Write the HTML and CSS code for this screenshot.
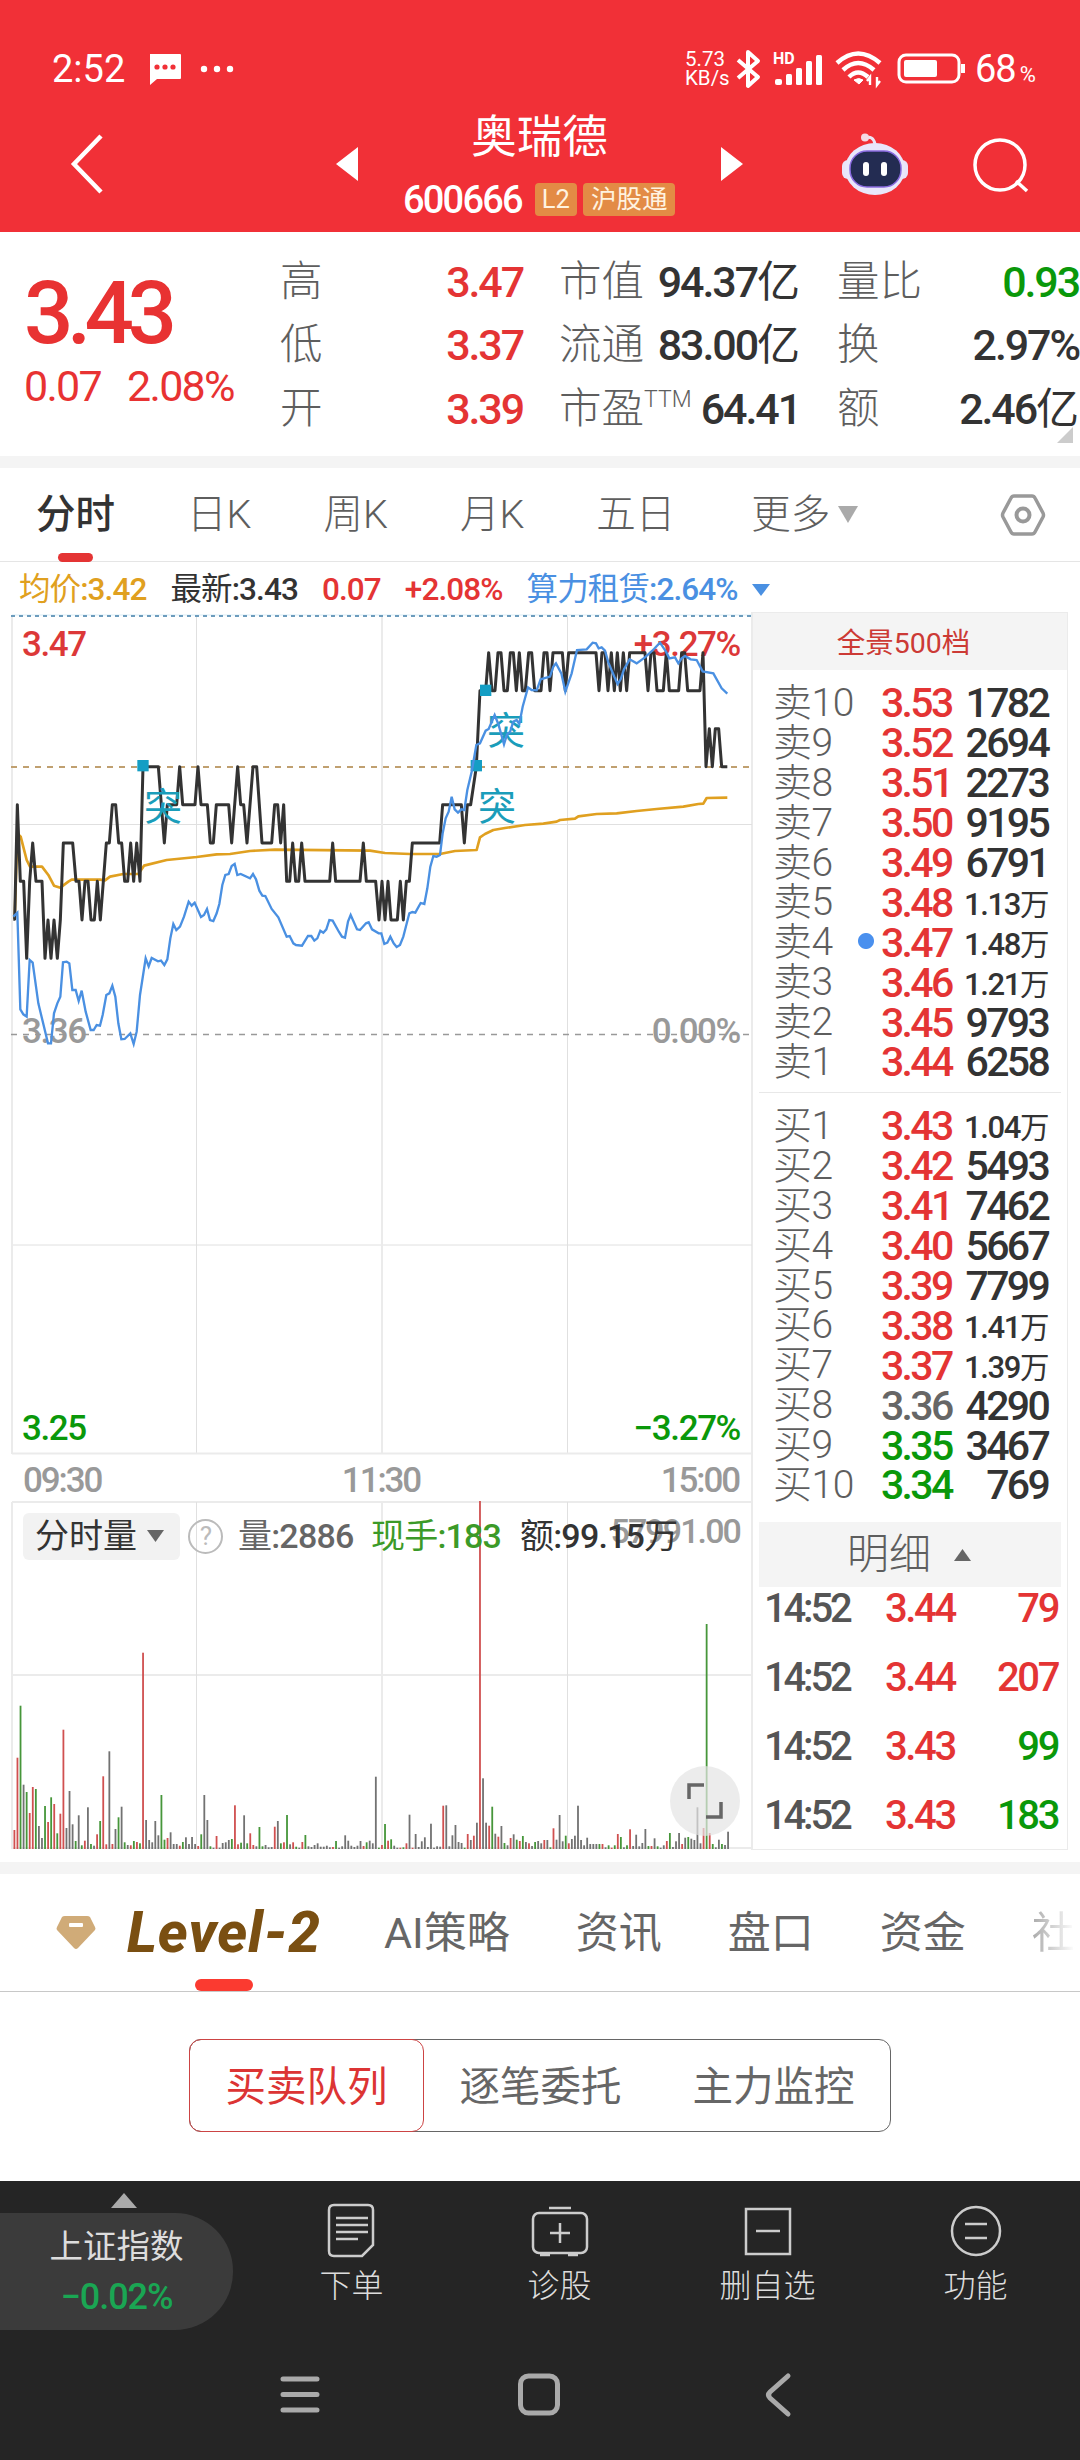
FILE: index.html
```html
<!DOCTYPE html>
<html lang="zh-CN">
<head>
	<meta charset="utf-8">
	<title>奥瑞德 600666</title>
	<link rel="stylesheet" href="styles.css">
</head>
<body>
	<header class="header">
		<div class="status">
			<span class="clock">2:52</span>
			<svg class="msg" width="32" height="31" viewBox="0 0 32 31"><path d="M1 0h30q1 0 1 1v23q0 1-1 1H8l-7 6V1z" fill="#fff"/><g fill="#f13037"><circle cx="8" cy="13" r="2.6"/><circle cx="16" cy="13" r="2.6"/><circle cx="24" cy="13" r="2.6"/></g></svg>
			<svg class="dots" width="34" height="8" viewBox="0 0 34 8" fill="#fff"><circle cx="4" cy="4" r="3.2"/><circle cx="17" cy="4" r="3.2"/><circle cx="30" cy="4" r="3.2"/></svg>
			<span class="speed">5.73<br>KB/s</span>
			<svg class="bt" width="26" height="38" viewBox="0 0 26 38" fill="none" stroke="#fff" stroke-width="4" stroke-linejoin="round"><path d="M2 10l20 17-10 9V2l10 9L2 28"/></svg>
			<svg class="signal" width="50" height="34" viewBox="0 0 50 34"><text x="0" y="12" class="hd">HD</text><g fill="#fff"><rect x="2" y="27" width="7" height="6" rx="2"/><rect x="13" y="22" width="6" height="11" rx="1.5"/><rect x="23" y="16" width="6" height="17" rx="1.5"/><rect x="33" y="9" width="6" height="24" rx="1.5"/><rect x="43" y="3" width="6" height="30" rx="1.5"/></g></svg>
			<svg class="wifi" width="48" height="36" viewBox="0 0 48 36" fill="none" stroke="#fff" stroke-width="4.5"><path d="M2 12q21-19 43 0"/><path d="M8 19q15-14 31 0"/><path d="M14 26q9-9 19 0"/><path d="M19 29q5-3 9 0l-4 4z" fill="#fff" stroke-width="1"/><path d="M35 34v-8l-3 4M42 26v8l3-4" stroke-width="2.4"/></svg>
			<svg class="battery" width="70" height="32" viewBox="0 0 70 32"><rect x="2" y="2" width="60" height="27" rx="7" fill="none" stroke="#fff" stroke-width="3"/><rect x="7" y="7" width="33" height="17" rx="2" fill="#fff"/><path d="M66 11v9" stroke="#fff" stroke-width="4"/></svg>
			<span class="level">68<small>%</small></span>
		</div>
		<div class="titlebar">
			<svg class="back" width="33" height="60" viewBox="0 0 33 60" fill="none" stroke="#fff" stroke-width="4.5"><path d="M31 2L4 30l27 28"/></svg>
			<svg class="prev" width="22" height="34" viewBox="0 0 22 34"><path d="M22 0v34L0 17z" fill="#fff"/></svg>
			<div class="stock">
				<h1>奥瑞德</h1>
				<div class="code"><span>600666</span><b class="l2">L2</b><b>沪股通</b></div>
			</div>
			<svg class="next" width="22" height="34" viewBox="0 0 22 34"><path d="M0 0v34l22-17z" fill="#fff"/></svg>
			<svg class="robot" width="68" height="62" viewBox="0 0 68 62">
				<path d="M24 5q8-3 10 6" fill="none" stroke="#ece6f6" stroke-width="3"/><circle cx="24" cy="4.500" r="4" fill="#f4d9e4"/>
				<rect x="1" y="27" width="14" height="19" rx="6" fill="#e9e4fa"/><rect x="53" y="27" width="14" height="19" rx="6" fill="#e9e4fa"/>
				<ellipse cx="34" cy="36" rx="30" ry="26" fill="#e9e7fb"/>
				<rect x="9" y="18" width="51" height="36" rx="17" fill="#232c52" stroke="#8a6be0" stroke-width="1.500"/>
				<rect x="22" y="29" width="6" height="14" rx="3" fill="#fff"/><rect x="40" y="29" width="6" height="14" rx="3" fill="#fff"/>
			</svg>
			<svg class="search" width="56" height="56" viewBox="0 0 56 56" fill="none" stroke="#fff" stroke-width="3.500"><circle cx="27" cy="27" r="25"/><path d="M43 43l11 10"/></svg>
		</div>
	</header>

	<section class="quote">
		<div class="last">
			<div class="price">3.43</div>
			<div class="change"><span>0.07</span><span>2.08%</span></div>
		</div>
		<dl class="c1">
			<div><dt>高</dt><dd class="red">3.47</dd></div>
			<div><dt>低</dt><dd class="red">3.37</dd></div>
			<div><dt>开</dt><dd class="red">3.39</dd></div>
		</dl>
		<dl class="c2">
			<div><dt>市值</dt><dd>94.37<span>亿</span></dd></div>
			<div><dt>流通</dt><dd>83.00<span>亿</span></dd></div>
			<div><dt>市盈<sup>TTM</sup></dt><dd>64.41</dd></div>
		</dl>
		<dl class="c3">
			<div><dt>量比</dt><dd class="green">0.93</dd></div>
			<div><dt>换</dt><dd>2.97%</dd></div>
			<div><dt>额</dt><dd>2.46<span>亿</span></dd></div>
		</dl>
		<svg class="corner" width="16" height="16" viewBox="0 0 16 16"><path d="M16 0v16H0z" fill="#ccc"/></svg>
	</section>

	<nav class="tabs">
		<a class="on">分时</a><a>日K</a><a>周K</a><a>月K</a><a>五日</a><a>更多</a>
		<svg class="down" width="20" height="17" viewBox="0 0 20 17"><path d="M0 0h20L10 17z" fill="#aaa"/></svg>
		<svg class="gear" width="46" height="42" viewBox="0 0 46 42" fill="none" stroke="#999"><path d="M14 2h18q2 0 3 2l8 15q1 2 0 4l-8 15q-1 2-3 2H14q-2 0-3-2L3 23q-1-2 0-4l8-15q1-2 3-2z" stroke-width="3.500"/><circle cx="23" cy="21" r="6.500" stroke-width="4"/></svg>
	</nav>

	<div class="legend">
		<span class="avg">均价<b>:3.42</b></span>
		<span>最新<b>:3.43</b></span>
		<span class="red"><b>0.07</b></span>
		<span class="red"><b>+2.08%</b></span>
		<span class="sector">算力租赁<b>:2.64%</b></span>
		<svg width="18" height="12" viewBox="0 0 18 12"><path d="M0 0h18L9 12z" fill="#4a90e2"/></svg>
	</div>

	<main class="board">
		<div class="charts">
			<svg class="trend" width="753" height="842" viewBox="0 612 753 842">
				<g stroke="#e0e0e0" fill="none">
					<path d="M196.500 616v838M567.500 616v838M12 824.500h740M12 1245h740"/>
					<path d="M12 616v838M382 616v838M12 1453.500h740" stroke="#ebebeb" stroke-width="2"/>
				</g>
				<path d="M12 615h740" stroke="#d9edf7"/>
				<path d="M11 616h741" stroke="#6c9cbd" stroke-width="2" stroke-dasharray="4 4"/>
				<path d="M11 767h740" stroke="#c0a070" stroke-width="1.800" stroke-dasharray="6 6"/>
				<path d="M11 1034.500h740" stroke="#999" stroke-width="1.500" stroke-dasharray="6 6"/>
				<g class="num">
					<text x="22" y="656" class="red">3.47</text>
					<text x="740" y="656" class="red end">+3.27%</text>
					<text x="22" y="1043" class="gray">3.36</text>
					<text x="740" y="1043" class="gray end">0.00%</text>
					<text x="22" y="1440" class="green">3.25</text>
					<text x="740" y="1440" class="green end">−3.27%</text>
				</g>
				<!-- three units per pixel, origin at 0,600 -->
				<g transform="translate(0 600) scale(.33333)" fill="none" stroke-linejoin="round">
					<polyline stroke="#e0a020" stroke-width="8" points="44,958 52,700 62,710 80,780 90,800 126,800 145,825 162,857 181,863 205,845 215,839 300,839 315,841 330,830 370,822 415,822 432,797 500,780 590,771 650,763 690,762 750,753 825,749 1110,752 1155,759 1230,762 1320,762 1365,753 1430,750 1440,712 1455,702 1480,690 1515,684 1575,675 1630,671 1670,665 1680,660 1725,656 1735,649 1790,642 1850,640 1910,633 1970,627 2050,620 2095,612 2110,611 2120,594 2182,593"/>
					<polyline stroke="#333" stroke-width="9" points="40,958 44,958 52,614 61,844 71,844 80,1075 89,844 98,729 108,844 126,844 135,1075 144,960 153,1075 162,960 172,1075 181,960 190,729 218,729 228,844 237,844 246,960 255,844 264,844 273,960 283,960 292,844 301,960 310,844 319,729 328,729 337,614 347,614 356,729 365,729 374,844 383,844 392,729 401,844 410,729 420,844 429,500 475,500 484,614 493,729 502,614 530,614 539,500 548,614 585,614 594,500 603,614 622,614 631,729 640,729 649,614 686,614 695,729 713,500 722,614 731,614 741,729 759,500 770,500 786,729 815,729 824,614 833,614 842,729 851,614 860,844 869,844 878,729 887,844 896,844 905,729 915,844 989,844 998,729 1007,844 1080,844 1090,729 1099,844 1127,844 1137,960 1146,844 1155,960 1164,844 1173,960 1192,960 1201,844 1210,960 1219,844 1228,844 1237,729 1319,729 1328,614 1384,614 1393,729 1402,614 1412,614 1429,500 1440,272 1457,272 1466,158 1476,272 1485,272 1494,158 1503,158 1512,272 1522,272 1531,158 1540,158 1549,272 1558,158 1567,272 1576,272 1586,158 1595,158 1604,272 1623,272 1632,158 1641,158 1650,272 1659,158 1687,158 1696,272 1706,158 1788,158 1797,272 1806,158 1815,158 1824,272 1834,158 1843,272 1852,158 1861,272 1870,158 1880,272 1889,158 1935,158 1944,272 1953,158 1962,158 1971,272 1990,272 1999,158 2008,272 2036,272 2045,158 2054,158 2063,272 2100,272 2109,158 2118,500 2128,386 2137,500 2146,386 2156,386 2165,500 2182,500"/>
					<g fill="#149ec4"><rect x="412" y="480" width="34" height="34"/><rect x="1412" y="480" width="34" height="34"/><rect x="1440" y="254" width="34" height="34"/></g>
				</g>
				<g class="mark"><text x="144" y="820">突</text><text x="487" y="744">突</text><text x="478" y="820">突</text></g>
				<g transform="translate(0 600) scale(.33333)" fill="none">
					<polyline stroke="#4a90e2" stroke-width="7" points="40,950 52,938 61,1228 70,1243 80,1250 89,1080 98,1088 115,1210 144,1330 153,1330 162,1240 172,1210 181,1190 189,1087 200,1085 208,1090 217,1170 227,1170 236,1203 245,1172 257,1235 272,1290 281,1290 290,1275 300,1277 308,1245 319,1185 328,1180 337,1157 346,1190 355,1270 364,1318 374,1317 391,1300 401,1332 410,1295 420,1185 437,1075 446,1099 455,1074 474,1084 483,1082 493,1095 502,1078 511,1015 520,972 529,990 540,980 552,950 566,905 575,917 584,908 603,951 612,945 621,927 630,960 640,963 650,940 658,912 667,855 676,825 686,822 695,798 704,792 712,825 722,822 750,835 759,822 768,838 778,872 787,887 796,888 815,927 835,952 860,1010 869,1008 880,1030 888,1035 906,1037 924,1008 934,1008 943,1022 952,1015 961,992 970,998 979,988 988,960 998,962 1017,996 1026,1010 1035,1013 1044,965 1052,945 1071,988 1080,990 1098,970 1106,967 1116,988 1136,1000 1144,1000 1153,1032 1162,1028 1171,1010 1181,1030 1190,1041 1200,1035 1210,1010 1228,940 1237,936 1246,938 1262,909 1273,912 1282,865 1291,800 1300,768 1310,770 1320,765 1328,700 1337,655 1346,635 1355,590 1364,628 1374,638 1384,628 1393,630 1402,570 1415,515 1429,435 1440,430 1457,392 1466,387 1484,345 1495,372 1512,433 1521,403 1530,396 1540,365 1550,360 1558,372 1568,320 1584,262 1595,270 1610,271 1622,238 1650,230 1660,200 1668,190 1684,220 1696,275 1715,220 1731,150 1760,148 1778,128 1788,130 1796,145 1805,142 1815,152 1825,187 1843,230 1853,252 1862,238 1872,208 1889,178 1910,190 1935,172 1962,147 1980,128 1998,155 2008,175 2025,172 2035,190 2045,175 2055,168 2072,178 2090,180 2108,214 2140,220 2165,265 2182,281"/>
				</g>
			</svg>
			<div class="times"><span>09:30</span><span>11:30</span><span>15:00</span></div>
			<div class="volume">
				<svg width="753" height="349" viewBox="0 1501 753 349">
					<path d="M12 1502h740M12 1675h740M12 1848h740M12 1502v347M382 1502v347" stroke="#ebebeb" stroke-width="2"/>
					<path d="M196.500 1502v347M567.500 1502v347" stroke="#e0e0e0"/>
					<g id="bars"></g>
					<text x="740" y="1543" class="num max gray end">57991.00</text>
				</svg>
				<div class="vinfo">
					<span class="chip">分时量<svg width="17" height="12" viewBox="0 0 17 12"><path d="M0 0h17L8.500 12z" fill="#666"/></svg></span>
					<span class="help">?</span>
					<span class="v1">量<b>:2886</b></span>
					<span class="v2">现手<b>:183</b></span>
					<span class="v3">额<b>:99.15</b>万</span>
				</div>
				<div class="expand"><svg width="36" height="36" viewBox="0 0 36 36" fill="none" stroke="#666" stroke-width="3.500"><path d="M2 16V2h15M34 19v15H19"/></svg></div>
			</div>
		</div>

		<aside class="book">
			<div class="bookhead">全景500档</div>
			<div class="rows" id="sell"></div>
			<div class="rows buy" id="buy"></div>
			<div class="detail">明细<svg width="17" height="12" viewBox="0 0 17 12"><path d="M0 12h17L8.500 0z" fill="#666"/></svg></div>
			<div class="ticks">
				<div><span>14:52</span><b>3.44</b><i class="red">79</i></div>
				<div><span>14:52</span><b>3.44</b><i class="red">207</i></div>
				<div><span>14:52</span><b>3.43</b><i class="green">99</i></div>
				<div><span>14:52</span><b>3.43</b><i class="green">183</i></div>
			</div>
		</aside>
	</main>

	<nav class="tabs2">
		<svg class="gem" width="40" height="36" viewBox="0 0 40 36"><path d="M9 1h22q2 0 3 1l5 10q1 2 0 3L22 33q-2 2-4 0L1 15q-1-1 0-3L6 2q1-1 3-1z" fill="#d0ab78"/><rect x="13" y="8" width="14" height="4" rx="1" fill="#fff"/></svg>
		<a class="on">Level-2</a><a>AI策略</a><a>资讯</a><a>盘口</a><a>资金</a><a class="fade">社</a>
	</nav>

	<div class="seg"><a class="on">买卖队列</a><a>逐笔委托</a><a>主力监控</a></div>

	<footer class="footer">
		<div class="actions">
			<div class="index">
				<svg width="26" height="15" viewBox="0 0 26 15"><path d="M0 15h26L13 0z" fill="#aaa"/></svg>
				<div><span>上证指数</span><em>−0.02%</em></div>
			</div>
			<a><svg width="60" height="56" viewBox="0 0 60 56"><path d="M12 2h34q5 0 5 5v35L40 53H12q-5 0-5-5V7q0-5 5-5zM14 15h32M14 22h32M14 29h32M14 36h22"/></svg>下单</a>
			<a><svg width="60" height="56" viewBox="0 0 60 56"><rect x="3" y="10" width="54" height="40" rx="6"/><path d="M19 5h22M30 20v20M20 30h20M10 52h10M38 52h10"/></svg>诊股</a>
			<a><svg width="60" height="56" viewBox="0 0 60 56"><path d="M8 6h44v45H8zM18 28h24"/></svg>删自选</a>
			<a><svg width="60" height="56" viewBox="0 0 60 56"><circle cx="30" cy="28" r="24"/><path d="M19 21h22M19 35h22"/></svg>功能</a>
		</div>
		<div class="sysnav">
			<svg width="40" height="44" viewBox="0 0 40 44"><path d="M3 6h34M3 21.500h34M3 37h34" stroke-linecap="round"/></svg>
			<svg width="42" height="44" viewBox="0 0 42 44"><rect x="2.500" y="3" width="37" height="37" rx="8"/></svg>
			<svg width="28" height="44" viewBox="0 0 28 44"><path d="M24 3L6 19q-3 3 0 6l18 16" stroke-linecap="round"/></svg>
		</div>
	</footer>
	<script src="script.js"></script>
</body>
</html>
```
FILE: styles.css
```css
* {
	box-sizing: border-box;
}
body {
	margin: 0;
	width: 1080px;
	height: 2460px;
	overflow: hidden;
	background: #fff;
	color: #333;
	font-family: Roboto, "Noto Sans CJK SC", sans-serif;
	white-space: nowrap;
}
svg {
	display: block;
	flex: none;
	overflow: visible;
}
h1, dl, dd {
	margin: 0;
}
b { font-weight: 500; }
.red { color: #e43434; fill: #dc3838; }
.green { color: #0a980a; fill: #0a980a; }
.gray { fill: #999; }

/* header */
.header {
	height: 232px;
	background: #f13037;
	color: #fff;
}
.status {
	display: flex;
	align-items: center;
	height: 100px;
	padding: 38px 0 0 52px;
}
.clock {
	width: 97px;
	font-size: 38px;
}
.dots { margin: 0 451px 0 19px; }
.speed {
	width: 51px;
	font-size: 20.5px;
	line-height: 19px;
}
.signal { margin-left: 11px; }
.hd {
	fill: #fff;
	font-size: 16px;
	font-weight: 700;
}
.wifi { margin-left: 12px; }
.battery { margin-left: 14px; }
.level {
	margin-left: 8px;
	font-size: 38px;
	letter-spacing: -1px;
}
.level small { font-size: 22px; margin-left: 4px; }
.titlebar {
	display: flex;
	align-items: center;
	height: 128px;
	padding-left: 70px;
}
.prev { margin-left: 233px; }
.stock {
	flex: none;
	width: 255px;
	margin: 0 54px;
	text-align: center;
}
.stock h1 {
	padding-top: 5px;
	font-size: 45.5px;
	font-weight: 400;
	line-height: 66px;
}
.code {
	display: flex;
	align-items: center;
	width: 300px;
	height: 57px;
	margin-left: -9px;
	letter-spacing: -1.8px;
	font-size: 38px;
	font-weight: 500;
}
.code b {
	margin-left: 6px;
	padding: 0 8px;
	border-radius: 4px;
	background: #e38b45;
	color: #fff3e0;
	font-size: 25.5px;
	font-weight: 400;
	line-height: 33px;
	letter-spacing: 0;
}
.code .l2 { margin-left: 13px; padding: 0 7px; }
.robot { margin-left: 98px; }
.search { margin-left: 64px; margin-top: 3px; }

/* quote */
.quote {
	display: flex;
	position: relative;
	height: 236px;
	padding-top: 18px;
	border-bottom: 12px solid #f4f4f4;
}
.last {
	width: 280px;
	padding: 20px 0 0 24px;
	color: #e83232;
}
.price {
	height: 86px;
	line-height: 86px;
	font-size: 87px;
	font-weight: 500;
	letter-spacing: -6.5px;
}
.change {
	display: flex;
	gap: 26px;
	line-height: 61px;
	font-size: 43px;
	letter-spacing: -1.7px;
}
.quote dl div {
	display: flex;
	justify-content: space-between;
	align-items: center;
	height: 63.5px;
	font-size: 43px;
	line-height: 60px;
}
.quote dt {
	color: #5e5e5e;
	font-size: 42.5px;
	font-weight: 300;
}
.quote dd {
	font-weight: 500;
	letter-spacing: -2.1px;
}
.quote dd span { font-weight: 400; letter-spacing: 0; }
.quote sup {
	font-size: 23px;
	line-height: 0;
	vertical-align: 16px;
}
.c1 { width: 243px; }
.c2 { width: 241px; margin-left: 36px; }
.c3 { width: 242px; margin-left: 37px; }
.corner {
	position: absolute;
	right: 7px;
	bottom: 13px;
}

/* period tabs */
.tabs {
	display: flex;
	align-items: center;
	height: 94px;
	padding-left: 36px;
	border-bottom: 1px solid #e5e5e5;
	font-size: 39.5px;
	font-weight: 300;
	color: #5e5e5e;
}
.tabs a {
	position: relative;
	line-height: 98px;
	margin-right: 72px;
}
.tabs a:nth-child(5) { margin-right: 76px; }
.tabs a:nth-child(6) { margin-right: 8px; }
.tabs .on {
	color: #333;
	font-weight: 500;
}
.tabs .on::after {
	content: "";
	position: absolute;
	left: 22px;
	bottom: 2px;
	width: 35px;
	height: 9px;
	border-radius: 5px;
	background: #e43434;
}
.gear { margin-left: 142px; }

.legend {
	display: flex;
	align-items: center;
	height: 50px;
	padding: 5px 0 0 19px;
	font-size: 31.5px;
	line-height: 44px;
	letter-spacing: -.9px;
}
.legend span { margin-right: 24px; }
.legend .avg { color: #e0a020; }
.legend .sector { color: #4a90e2; margin-right: 14px; }

/* chart */
.board {
	display: flex;
	height: 1250px;
	padding-right: 12px;
}
.charts { width: 753px; flex: none; border-right: 2px solid #ebebeb; height: 1238px; }
.trend { width: 753px; }
.num {
	font-size: 35px;
	font-weight: 500;
	letter-spacing: -1.4px;
}
.max { font-size: 34px; letter-spacing: -1.9px; }
.end { text-anchor: end; }
.mark {
	font-size: 38px;
	fill: #1a9dba;
}
.times {
	display: flex;
	justify-content: space-between;
	height: 47px;
	padding: 0 12px 0 23px;
	color: #999;
	font-size: 35px;
	font-weight: 500;
	letter-spacing: -2.1px;
	line-height: 53px;
}
.volume { position: relative; }
.vinfo {
	display: flex;
	align-items: center;
	position: absolute;
	top: 12px;
	left: 23px;
	height: 47px;
	font-size: 34px;
	line-height: 43px;
	letter-spacing: -.8px;
}
.vinfo > span { padding-bottom: 1px; }
.vinfo .chip {
	display: flex;
	align-items: center;
	width: 157px;
	height: 47px;
	padding-left: 12px;
	gap: 10px;
	border-radius: 6px;
	background: #f2f2f2;
	letter-spacing: 0;
}
.vinfo .help {
	width: 35px;
	height: 35px;
	margin: 0 15px 0 8px;
	border: 2px solid #bbb;
	border-radius: 50%;
	color: #bbb;
	font-size: 26px;
	line-height: 31px;
	text-align: center;
}
.v1 { width: 133px; color: #666; }
.v2 { width: 149px; color: #3c9a28; }
.expand {
	display: flex;
	align-items: center;
	justify-content: center;
	position: absolute;
	left: 670px;
	top: 265px;
	width: 70px;
	height: 70px;
	border-radius: 50%;
	background: rgba(228, 228, 228, .7);
}

/* order book */
.book {
	width: 315px;
	height: 1238px;
	border: 1px solid #ebebeb;
	border-left: 0;
}
.bookhead {
	height: 57px;
	background: #f4f4f4;
	color: #cc3a35;
	font-size: 28.5px;
	line-height: 61px;
	text-align: center;
	padding-right: 13px;
}
.rows {
	height: 423px;
	margin: 0 6px;
	padding-top: 12px;
	border-bottom: 1px solid #e8e8e8;
}
.rows.buy {
	height: 429px;
	border: 0;
}
.rows div {
	display: flex;
	align-items: center;
	height: 39.9px;
	padding-left: 14px;
	line-height: 40px;
}
.rows span {
	width: 108px;
	padding-top: 2px;
	color: #5e5e5e;
	font-size: 39px;
	font-weight: 300;
	letter-spacing: -.5px;
}
.rows .cur {
	background: radial-gradient(circle at 107px 20px, #4a90ee 7.500px, transparent 8.500px);
}
.rows b, .rows i {
	padding-top: 3px;
	font-size: 41px;
	font-weight: 500;
	letter-spacing: -2.7px;
}
.rows b { width: 70px; }
.rows i {
	flex: 1;
	padding-right: 13px;
	text-align: right;
	font-style: normal;
}
.rows .wan {
	padding-top: 7px;
	font-size: 31px;
	letter-spacing: -1.4px;
}
.rows u {
	font-weight: 400;
	text-decoration: none;
	font-size: 29.5px;
}
.rows .flat { color: #666; }
.detail {
	display: flex;
	align-items: center;
	gap: 23px;
	height: 65px;
	margin: 0 6px;
	padding-left: 88px;
	background: #f4f4f4;
	color: #5e5e5e;
	font-size: 42px;
	font-weight: 300;
	line-height: 61px;
}
.ticks { margin: -13px 9px 0 11px; }
.ticks div {
	display: flex;
	align-items: center;
	height: 69px;
	font-size: 40px;
	font-weight: 500;
	letter-spacing: -2.4px;
}
.ticks span { width: 121px; color: #555; letter-spacing: -3.2px; }
.ticks b { color: #e43434; }
.ticks i { flex: 1; text-align: right; font-style: normal; }

/* lower tabs */
.tabs2 {
	display: flex;
	align-items: center;
	height: 130px;
	padding-left: 56px;
	border-top: 12px solid #f4f4f4;
	border-bottom: 1.5px solid #c8c8c8;
	color: #666;
	font-size: 43px;
}
.tabs2 a {
	position: relative;
	margin-right: 66px;
	line-height: 120px;
}
.tabs2 .on {
	width: 191px;
	margin: 0 66px 0 31px;
	color: #7a4f12;
	font-size: 57px;
	font-style: italic;
	font-weight: 800;
	letter-spacing: .9px;
}
.tabs2 .on::after {
	content: "";
	position: absolute;
	left: 68px;
	bottom: 2px;
	width: 58px;
	height: 12px;
	border-radius: 6px;
	background: #fb3a30;
}
.tabs2 .fade {
	margin: 0;
	background: linear-gradient(90deg, #aaa, #fff);
	-webkit-background-clip: text;
	color: transparent;
}

.seg {
	display: flex;
	width: 702px;
	height: 93px;
	margin: 47px 0 0 189px;
	border: 1.5px solid #666;
	border-radius: 12px;
	color: #666;
	font-size: 40.5px;
	line-height: 95px;
}
.seg a {
	flex: 1;
	text-align: center;
}
.seg .on {
	margin: -1px 0 -1px -1px;
	border: 1.5px solid #cc4444;
	border-radius: 12px;
	color: #dc3434;
}

/* bottom bar */
.footer {
	height: 280px;
	margin-top: 49px;
	background: #252525;
	color: #ddd;
}
.actions {
	display: flex;
	height: 150px;
}
.actions a {
	display: flex;
	flex-direction: column;
	align-items: center;
	width: 208px;
	padding: 22px 0 0 1px;
	font-size: 32px;
	font-weight: 300;
	line-height: 55px;
}
.actions a svg {
	fill: none;
	stroke: #ccc;
	stroke-width: 2.5;
}
.index {
	width: 247px;
	padding-top: 12px;
}
.index svg { margin: 0 0 5px 111px; }
.index div {
	display: flex;
	flex-direction: column;
	align-items: center;
	width: 233px;
	height: 117px;
	padding-top: 8px;
	border-radius: 0 58px 58px 0;
	background: #3b3b3b;
	font-size: 33.5px;
	line-height: 51px;
}
.index em {
	color: #1aa653;
	font-size: 36px;
	font-style: normal;
	font-weight: 500;
	letter-spacing: -1px;
}
.sysnav {
	display: flex;
	padding: 42px 0 0 280px;
	fill: none;
	stroke: #aaa;
	stroke-width: 5;
}
.sysnav svg:nth-child(2) { margin: 0 204px 0 198px; }
```
FILE: script.js
```js
// minute volumes: colour letter + bar height, from 09:30
var vols = "r57 r274 g430 k193 g171 r108 r186 g180 k69 k33 g129 r81 g155 r135 g47 r106 r358 k63 k174 k74 g24 k101 g11 r25 k125 g15 k10 r44 g84 r218 r14 k293 r15 k60 g95 k127 g20 k12 r11 g24 r21 g17 r589 k87 k27 k20 k84 k41 g162 g28 r33 k50 k15 k15 r10 g21 k35 k15 k36 k15 r9 g44 k162 k87 g8 k4 r39 k4 k18 k20 k27 g30 r131 r14 g19 k101 g17 r47 r12 k8 g66 g8 k12 k5 k6 r67 k84 g17 r20 g102 k14 r20 g7 k4 r21 g42 k8 k6 k12 k17 k7 k7 k10 k5 r6 g24 k4 k8 k41 k25 k10 k6 k10 k24 r9 g20 k25 k17 k217 g4 r12 g75 r25 g29 k10 k4 r4 g5 r17 k103 r4 k45 k6 k23 k35 k6 k76 k4 k8 k7 r130 k131 k8 k41 k72 k21 k18 g4 r45 k27 r40 k79 r1044 k212 k79 r70 g127 k46 r37 k69 g18 k11 r33 k44 g28 r24 g39 k21 r17 k9 g21 k24 k17 r27 k27 g5 r62 k28 k102 k23 g40 r17 k30 k40 k130 k27 k11 k34 k15 k15 k15 g15 r15 k5 g11 r4 g11 r45 g36 k5 g11 r59 k9 k43 k8 k18 k60 g9 r9 k32 g8 k4 k11 r24 g48 k6 k23 k48 r15 k34 g36 k31 k27 k125 k17 r63 g675 r48 g15 k5 k28 g15 k12 k52".split(" ");
var colors = { r: "#d05050", g: "#46963a", k: "#727272" };
var html = "";
for (var i = 0; i < vols.length; i++) {
	var h = vols[i].slice(1) / 3;
	html += '<rect x="' + (13.5 + i * 3.063).toFixed(2) + '" y="' + (1849 - h).toFixed(1) + '" width="1.8" height="' + h.toFixed(1) + '" fill="' + colors[vols[i][0]] + '"/>';
}
document.getElementById("bars").innerHTML = html;

var sell = ["3.53 1782", "3.52 2694", "3.51 2273", "3.50 9195", "3.49 6791", "3.48 1.13万", "3.47 1.48万", "3.46 1.21万", "3.45 9793", "3.44 6258"];
var buy = ["3.43 1.04万", "3.42 5493", "3.41 7462", "3.40 5667", "3.39 7799", "3.38 1.41万", "3.37 1.39万", "3.36 4290", "3.35 3467", "3.34 769"];

function drawRows(id, list, side) {
	var out = "";
	list.forEach(function (row, n) {
		var p = row.split(" ");
		var cls = p[0] > 3.36 ? "red" : p[0] < 3.36 ? "green" : "flat";
		out += '<div class="' + (p[0] == 3.47 ? "cur" : "") + '"><span>' + side + (side == "卖" ? 10 - n : n + 1) + '</span><b class="' + cls + '">' + p[0] + '</b><i class="' + (p[1].indexOf("万") > 0 ? "wan" : "") + '">' + p[1].replace("万", "<u>万</u>") + "</i></div>";
	});
	document.getElementById(id).innerHTML = out;
}
drawRows("sell", sell, "卖");
drawRows("buy", buy, "买");
```
